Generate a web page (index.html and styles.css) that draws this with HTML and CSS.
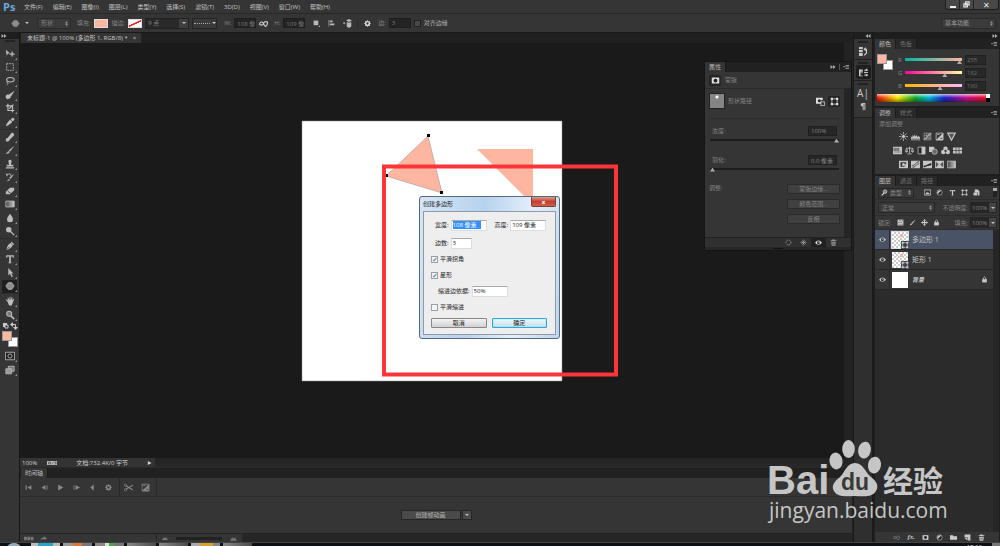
FILE: index.html
```html
<!DOCTYPE html>
<html lang="zh-CN">
<head>
<meta charset="utf-8">
<title>未标题-1</title>
<link rel="stylesheet" href="styles.css">
</head>
<body>
<svg class="defs" aria-hidden="true">
  <symbol id="move" viewBox="0 0 12 12"><path d="M1 1l5 4-2.500.5L2 8z"/><path d="M8.500 3v6M5.500 6h6" stroke="currentColor" stroke-width="1.500"/></symbol>
  <symbol id="marquee" viewBox="0 0 12 12"><path d="M2 2h8v8H2z" fill="none" stroke="currentColor" stroke-dasharray="2 1"/></symbol>
  <symbol id="lasso" viewBox="0 0 12 12"><ellipse cx="6.500" cy="4.500" rx="4.500" ry="2.700" fill="none" stroke="currentColor" stroke-width="1.300"/><path d="M3 6q-2 2 0 2t-1 3" fill="none" stroke="currentColor"/></symbol>
  <symbol id="quick" viewBox="0 0 12 12"><path d="M11.500 1L7 8 4 6z"/><path d="M1 7q2-3 5 0t-3 4q-3-1-2-4z"/></symbol>
  <symbol id="crop" viewBox="0 0 12 12"><path d="M3.500 1v8H11M1 3.500h8V11M10 2L5 7" fill="none" stroke="currentColor" stroke-width="1.400"/></symbol>
  <symbol id="dropper" viewBox="0 0 12 12"><path d="M9 1q3 0 2 3L9 5 7 3zM6 3l3 3-5 4-3 1 1-3z"/></symbol>
  <symbol id="heal" viewBox="0 0 12 12"><path d="M8 1q3-1 3 3L5 10q-2 1-3-1z"/><path d="M1 8q3-2 4 1t-4 2z"/></symbol>
  <symbol id="brush" viewBox="0 0 12 12"><path d="M11.500 1L6 8 4.500 6.500zM4 7l1.500 2Q4 11 .5 10.500 2.500 10 4 7z"/></symbol>
  <symbol id="stamp" viewBox="0 0 12 12"><path d="M4 3a2 2 0 114 0L7 7h3v2H2V7h3zM1 10h10v1.500H1z"/></symbol>
  <symbol id="history-brush" viewBox="0 0 12 12"><path d="M11 2L7 8 5 7zM5 8l1 2-4 1zM1 2h4v1H3v2H2z"/><path d="M5 2q3 0 2 3" fill="none" stroke="currentColor"/></symbol>
  <symbol id="eraser" viewBox="0 0 12 12"><path d="M6 2h5v3L6 10H1V7z"/><path d="M3 6l4 3" stroke="#353535"/></symbol>
  <symbol id="gradient" viewBox="0 0 12 12"><path d="M1 2.500h10v7H1z" fill="url(#gg)" stroke="currentColor"/></symbol>
  <symbol id="drop" viewBox="0 0 12 12"><path d="M6 1q4 5 3.500 7a3.500 3 0 01-7 0Q2 6 6 1z"/></symbol>
  <symbol id="dodge" viewBox="0 0 12 12"><circle cx="4.500" cy="4.500" r="3.300"/><path d="M6 6l5 5" stroke="currentColor" stroke-width="1.500"/></symbol>
  <symbol id="pen" viewBox="0 0 12 12"><path d="M8 1l3 3-2 1-2-3zM6.500 2.500L9 5.500Q8 9 1.500 11 3 4 6.500 2.500z"/><path d="M1.500 11L5.500 7" stroke="#353535"/></symbol>
  <symbol id="type" viewBox="0 0 12 12"><path d="M1.500 1.500h9v3h-1L9 3H7v7l1 .5v.5H4v-.5l1-.5V3H3l-.5 1.500h-1z"/></symbol>
  <symbol id="arrow" viewBox="0 0 12 12"><path d="M4 0v9l2-2 2 4 1.500-1-2-3.500H10z"/></symbol>
  <symbol id="poly" viewBox="0 0 12 12"><path d="M4 2h4l3 4-3 4H4L1 6z" fill="#8c8c8c" stroke="currentColor"/></symbol>
  <symbol id="hand" viewBox="0 0 12 12"><path d="M3 7L1 4.500l1-.7L4 5.500 3 2h1l1.500 3V1h1v4L8 1.500h1L8.500 5 10 3.500l1 .5-2 5-1 2.500H5z"/></symbol>
  <symbol id="zoom" viewBox="0 0 12 12"><circle cx="5" cy="4.500" r="3" fill="#777" stroke="currentColor" stroke-width="1.300"/><path d="M7 7l4 4" stroke="currentColor" stroke-width="2"/></symbol>
  <symbol id="mask" viewBox="0 0 12 12"><path d="M1 2h10v8H1z"/><circle cx="6" cy="6" r="2.500" fill="#222"/></symbol>
  <symbol id="screens" viewBox="0 0 12 12"><path d="M4 1.500h7v6H4z" fill="#777" stroke="currentColor"/><path d="M1 4.500h7v6H1z" fill="#999" stroke="currentColor"/></symbol>
  <symbol id="link" viewBox="0 0 12 12"><path d="M6 6Q3.500 2.500 1.500 5t1 3T6 6t3.500-2.500 1 4.500T6 6" fill="none" stroke="currentColor" stroke-width="1.500"/></symbol>
  <symbol id="combine" viewBox="0 0 12 12"><path d="M1 1h8v8H1z"/><path d="M9 12l3-3v3z"/></symbol>
  <symbol id="align" viewBox="0 0 12 12"><path d="M1 0h1v11H1zM3 1h5v3H3zM3 6h8v3H3z"/></symbol>
  <symbol id="stack" viewBox="0 0 12 12"><path d="M8 0l4 2-4 2-4-2zM5 4l3 1 3-1v6l-3 2-3-2zM0 5h3v1H0zM1 4h1v3H1z"/></symbol>
  <symbol id="gear" viewBox="0 0 12 12"><path d="M6 .5v11M.5 6h11M2 2l8 8M10 2l-8 8" stroke="currentColor" stroke-width="1.500"/><circle cx="6" cy="6" r="3.200" fill="#333" stroke="currentColor" stroke-width="2.400"/></symbol>
  <symbol id="eye" viewBox="0 0 12 12"><path d="M0 6.500Q6-1 12 6.500 6 13 0 6.500z"/><circle cx="6" cy="6.300" r="2.500" fill="#222"/><circle cx="6.500" cy="5.500" r="1"/></symbol>
  <symbol id="trash" viewBox="0 0 12 12"><path d="M4 1h4v1h3v1.500H1V2h3zM2 4.500h8l-1 7H3z"/><path d="M5 6v4M7 6v4" stroke="#333"/></symbol>
  <symbol id="lock" viewBox="0 0 12 12"><path d="M2 5.500h8V11H2z"/><path d="M4 6V3.500q2-3.500 4 0V6" fill="none" stroke="currentColor" stroke-width="1.500"/></symbol>
  <symbol id="frame" viewBox="0 0 12 12"><path d="M2.500 2.500h7v7h-7z" fill="none" stroke="currentColor"/><path d="M1 1h3v3H1zM8 1h3v3H8zM1 8h3v3H1zM8 8h3v3H8z"/></symbol>
  <symbol id="cmask" viewBox="0 0 12 12"><path d="M0 1h9v3H7v5H0z"/><circle cx="4.500" cy="5" r="2" fill="#222"/><path d="M6.500 6.500h5v5h-5z" fill="#333" stroke="currentColor"/></symbol>
  <symbol id="dotcircle" viewBox="0 0 12 12"><circle cx="6" cy="6" r="4.200" fill="none" stroke="currentColor" stroke-width="1.500" stroke-dasharray="2.500 1.500"/></symbol>
  <symbol id="apply" viewBox="0 0 12 12"><path d="M6 1l5 5-5 5-5-5z" fill="none" stroke="currentColor"/><path d="M6 3v6M3 6h6" stroke="currentColor" stroke-width="2"/></symbol>
  <symbol id="sun" viewBox="0 0 12 12"><path d="M6 0v12M0 6h12M2 2l8 8M10 2l-8 8" stroke="currentColor"/><circle cx="6" cy="6" r="2.700" stroke="#353535"/></symbol>
  <symbol id="levels" viewBox="0 0 12 12"><path d="M0 9V6l2 1V4l2 2 1-3 1 3 2-2v3l2-2 1 2 1-1v3zM0 10h12v1H0z"/></symbol>
  <symbol id="curves" viewBox="0 0 12 12"><path d="M1.500 1.500h9v9h-9zM1.500 5h9M5 1.500v9M8 1.500v9M1.500 8h9" fill="none" stroke="currentColor" stroke-width=".7"/><path d="M1 10Q5 9 6 6t5-4" fill="none" stroke="currentColor" stroke-width="1.300"/></symbol>
  <symbol id="exposure" viewBox="0 0 12 12"><path d="M1.500 1.500h9v9h-9z" fill="none" stroke="currentColor"/><path d="M11 1v10H1zM3 3h3v1H3z"/><path d="M7 8.500h3" stroke="#333"/></symbol>
  <symbol id="vibrance" viewBox="0 0 12 12"><path d="M1 1.500h10L6 11z" fill="#555" stroke="currentColor" stroke-width="1.500"/></symbol>
  <symbol id="grid" viewBox="0 0 12 12"><path d="M0 2h12v8H0z"/><path d="M4 2v8M8 2v8M0 6h12" stroke="#454545"/></symbol>
  <symbol id="huesat" viewBox="0 0 12 12"><path d="M0 1h12v10H0z"/><path d="M1 3h3v3H1zM5 3h3v3H5zM1 8h10" fill="#888" stroke="#666"/></symbol>
  <symbol id="scales" viewBox="0 0 12 12"><path d="M6 1v9M2 3h8M3 10.500h6M2 3L.5 7h3zM10 3L8.500 7h3z" fill="none" stroke="currentColor"/><path d="M0 7h4L2 9zM8 7h4l-2 2z"/></symbol>
  <symbol id="bw" viewBox="0 0 12 12"><path d="M1.500 1.500h9v9h-9z" fill="#222" stroke="currentColor"/><path d="M6 1h5v10H6z"/></symbol>
  <symbol id="photo" viewBox="0 0 12 12"><path d="M0 1h7v7H0z"/><circle cx="7.500" cy="7.500" r="3.500" fill="#666" stroke="currentColor"/></symbol>
  <symbol id="mixer" viewBox="0 0 12 12"><circle cx="6" cy="3.500" r="3"/><circle cx="3" cy="8" r="3"/><circle cx="9" cy="8" r="3"/><circle cx="6" cy="6.500" r="1.500" fill="#333"/></symbol>
  <symbol id="invert" viewBox="0 0 12 12"><path d="M0 1h12v10H0z"/><path d="M2 3h8L7 9H2z" fill="#333"/><circle cx="6" cy="6" r="2"/></symbol>
  <symbol id="poster" viewBox="0 0 12 12"><path d="M0 1h12v10H0z"/><path d="M1 8q4-1 5-3t5-3M2 10q4-1 5-3t4-2" fill="none" stroke="#444" stroke-width="1.200"/></symbol>
  <symbol id="thresh" viewBox="0 0 12 12"><path d="M0 1h12v10H0z"/><path d="M1 10V7q3 1 5-1l5-2v3L6 8z" fill="#222"/></symbol>
  <symbol id="selective" viewBox="0 0 12 12"><path d="M0 1h12v10H0z"/><path d="M1 2l4 4-4 4zM11 2L7 6l4 4z" fill="#555"/></symbol>
  <symbol id="gmap" viewBox="0 0 12 12"><path d="M.5 1.500h11v9H.5z" fill="url(#gg)" stroke="currentColor"/></symbol>
  <symbol id="image" viewBox="0 0 12 12"><path d="M.5 1.500h11v9H.5z" fill="none" stroke="currentColor" stroke-width="1.300"/><path d="M2 9l3-4 2 2 1-1 2 3z"/></symbol>
  <symbol id="half" viewBox="0 0 12 12"><circle cx="6" cy="6" r="4.500" fill="#222" stroke="currentColor"/><path d="M2.500 9A5 5 0 019 2.500z"/></symbol>
  <symbol id="smart" viewBox="0 0 12 12"><path d="M3 1h5l3 3v7H8V6H3z"/><path d="M1 6h6v5H1z"/></symbol>
  <symbol id="checker" viewBox="0 0 12 12"><path d="M1 1h10v10H1z"/><path d="M4 2h2v2H4zM8 2h2v2H8zM2 5h2v2H2zM6 5h2v2H6zM4 8h2v2H4zM8 8h2v2H8z" fill="#666"/></symbol>
  <symbol id="cross" viewBox="0 0 12 12"><path d="M6 0l2.500 3H7v2h2V3.500L12 6 9 8.500V7H7v2h1.500L6 12 3.500 9H5V7H3v1.500L0 6l3-2.500V5h2V3H3.500z"/></symbol>
  <symbol id="folder" viewBox="0 0 12 12"><path d="M0 2h5l1 2h6v6H0z"/></symbol>
  <symbol id="new" viewBox="0 0 12 12"><path d="M1 1h10v10H7V6H1z"/><path d="M1 7h5v4z"/></symbol>
  <symbol id="hist" viewBox="0 0 12 12"><path d="M0 0h5v3H0zM0 4h5v3H0zM0 8h5v4H0z"/><path d="M7 3h3v5l-3 3" fill="none" stroke="currentColor" stroke-width="1.500"/><path d="M6 3l3-3v6z"/></symbol>
  <symbol id="props" viewBox="0 0 12 12"><path d="M0 2h5v3H2v1h3v1H2v3h3v1H0z"/><path d="M7 3h5M7 6h5M7 9.500h5" stroke="currentColor" stroke-width="1.200"/><path d="M9 1h2v3H9zM7 5h2v2H7zM9 8h2v3H9z"/></symbol>
  <symbol id="menu" viewBox="0 0 12 12"><path d="M0 4h4L2 7zM5 2h7v1.500H5zM5 5h7v1.500H5zM5 8h7v1.500H5z"/></symbol>
  <symbol id="dleft" viewBox="0 0 12 12"><path d="M6 2v8L1 6zM11 2v8L6 6z"/></symbol>
  <symbol id="dright" viewBox="0 0 12 12"><path d="M1 2v8l5-4zM6 2v8l5-4z"/></symbol>
  <symbol id="scissors" viewBox="0 0 12 12"><path d="M3 4l9 5M3 8l9-5" stroke="currentColor" stroke-width="1.400"/><circle cx="2" cy="3" r="1.500" fill="none" stroke="currentColor"/><circle cx="2" cy="9" r="1.500" fill="none" stroke="currentColor"/></symbol>
  <symbol id="first" viewBox="0 0 12 12"><path d="M1 2h2v8H1zM11 2v8L4 6z"/></symbol>
  <symbol id="prev" viewBox="0 0 12 12"><path d="M7 2v8L1 6zM8 2h1v8H8zM10 2h1v8h-1z"/></symbol>
  <symbol id="play" viewBox="0 0 12 12"><path d="M2 1l9 5-9 5z"/></symbol>
  <symbol id="next" viewBox="0 0 12 12"><path d="M1 2h1v8H1zM3 2h1v8H3zM5 2v8l7-4z"/></symbol>
  <symbol id="audio" viewBox="0 0 12 12"><path d="M8 1v10L2 6z"/></symbol>
  <symbol id="share" viewBox="0 0 12 12"><path d="M7 2l5 3.500L7 9V7Q3 6 1 10 1 4 7 4z"/></symbol>
  <symbol id="frames" viewBox="0 0 18 12"><path d="M0 3h5v6H0zM6 3h5v6H6zM12 3h5v6h-5z"/></symbol>
  <symbol id="mount" viewBox="0 0 12 12"><path d="M0 10l4-6 2 3 2-3 4 6z"/></symbol>
  <symbol id="restore" viewBox="0 0 12 12"><path d="M4.500 1.500h6v5h-6zM1.500 5h6v5h-6z" fill="#555" stroke="currentColor" stroke-width="2"/></symbol>
  <linearGradient id="gg"><stop offset="0" stop-color="#444"/><stop offset="1" stop-color="#ccc"/></linearGradient>
</svg>

<header class="menubar">
  <span class="logo">Ps</span>
  <nav class="menus"><button>文件(F)</button><button>编辑(E)</button><button>图像(I)</button><button>图层(L)</button><button>类型(Y)</button><button>选择(S)</button><button>滤镜(T)</button><button>3D(D)</button><button>视图(V)</button><button>窗口(W)</button><button>帮助(H)</button></nav>
  <div class="winctl"><button aria-label="最小化"><i class="min"></i></button><button aria-label="还原"><svg class="ic"><use href="#restore"/></svg></button><button aria-label="关闭">✕</button></div>
</header>

<div class="options">
  <button class="preset" aria-label="多边形工具"><svg class="ic big"><use href="#poly"/></svg><i class="down"></i></button>
  <select class="mode" aria-label="模式"><option>形状</option></select>
  <span class="pair">填充:<button class="sw fill" aria-label="填充颜色"></button></span>
  <span class="pair">描边:<button class="sw none" aria-label="描边颜色"></button></span>
  <span class="combo"><input aria-label="描边宽度" value="9 点"><button aria-label="宽度列表"><i class="down"></i></button></span>
  <button class="line" aria-label="描边类型"><i class="dots"></i><i class="down"></i></button>
  <label class="pair wide">W:<input class="size" value="108 像素"></label>
  <svg class="ic big chain"><use href="#link"/></svg>
  <label class="pair">H:<input class="size" value="109 像素"></label>
  <div class="ops"><button aria-label="路径操作"><svg class="ic"><use href="#combine"/></svg></button><button aria-label="对齐"><svg class="ic"><use href="#align"/></svg></button><button aria-label="排列"><svg class="ic big"><use href="#stack"/></svg></button></div>
  <button class="cog" aria-label="设置"><svg class="ic"><use href="#gear"/></svg></button>
  <label class="pair dim">边:<input class="size" value="3"></label>
  <label class="edge"><input type="checkbox">对齐边缘</label>
  <select class="works" aria-label="工作区"><option>基本功能</option></select>
</div>

<div class="workspace">
  <aside class="tools">
    <div class="tophead"><svg class="tiny"><use href="#dright"/></svg></div>
    <i class="grip"></i>
    <div class="group g6"><button aria-label="移动"><svg><use href="#move"/></svg></button><button aria-label="选框"><svg><use href="#marquee"/></svg></button><button aria-label="套索"><svg><use href="#lasso"/></svg></button><button aria-label="快速选择"><svg><use href="#quick"/></svg></button><button aria-label="裁剪"><svg><use href="#crop"/></svg></button><button aria-label="吸管"><svg><use href="#dropper"/></svg></button></div>
    <div class="group g8"><button aria-label="修复"><svg><use href="#heal"/></svg></button><button aria-label="画笔"><svg><use href="#brush"/></svg></button><button aria-label="图章"><svg><use href="#stamp"/></svg></button><button aria-label="历史画笔"><svg><use href="#history-brush"/></svg></button><button aria-label="橡皮擦"><svg><use href="#eraser"/></svg></button><button aria-label="渐变"><svg><use href="#gradient"/></svg></button><button aria-label="模糊"><svg><use href="#drop"/></svg></button><button aria-label="减淡"><svg><use href="#dodge"/></svg></button></div>
    <div class="group g4"><button aria-label="钢笔"><svg><use href="#pen"/></svg></button><button aria-label="文字"><svg><use href="#type"/></svg></button><button aria-label="路径选择"><svg><use href="#arrow"/></svg></button><button class="on" aria-label="多边形"><svg><use href="#poly"/></svg></button></div>
    <div class="group g2"><button aria-label="抓手"><svg><use href="#hand"/></svg></button><button aria-label="缩放"><svg><use href="#zoom"/></svg></button></div>
    <svg class="swap" viewBox="0 0 16 8"><path d="M1 1h4v4H1z" fill="#ccc"/><path d="M3 3h3v3H3z" fill="#333" stroke="#ccc"/><path d="M10 2.500h3.500V7" fill="none" stroke="#ccc"/><path d="M8 2.500L11 0v5zM11 5h5l-2.500 3z" fill="#ccc"/></svg>
    <div class="fgbg"><i class="bg"></i><i class="fg"></i></div>
    <div class="group g2"><button aria-label="快速蒙版"><svg viewBox="0 0 12 12"><path d="M.5 1.500h11v9H.5z" fill="#222" stroke="currentColor"/><circle cx="6" cy="6" r="2.500" fill="none" stroke="currentColor"/></svg></button><button aria-label="屏幕模式"><svg><use href="#screens"/></svg></button></div>
  </aside>

  <main class="main">
    <div class="doctabs"><div class="doctab">未标题-1 @ 100% (多边形 1, RGB/8) * <button aria-label="关闭文档">×</button></div></div>
    <div class="canvas">
      <svg class="art" viewBox="0 0 320 264">
        <path d="M1 1h260v260H1z" fill="#fff" stroke="#888" stroke-width=".5"/>
        <path d="M127 16L85 56l56 17z" fill="#ffb6a0" stroke="#999" stroke-width=".6"/>
        <path d="M126 14h3v3h-3zM84 54h3v3h-3zM139 71h3v3h-3z" fill="#000"/>
        <path d="M176 29h56v56z" fill="#ffb6a0"/>
        <path d="M83 46.500h232v208H83z" fill="none" stroke="#fb3538" stroke-width="4"/>
      </svg>
      <form class="dialog">
        <div class="title"><span>创建多边形</span><button type="button" aria-label="关闭">x</button></div>
        <div class="dbody">
          <div class="drow ind"><label>宽度:<span class="field w35"><input class="hl" value="108 像素"></span></label><label class="second">高度:<span class="field w35"><input value="109 像素"></span></label></div>
          <div class="drow ind last"><label>边数:<span class="field w20"><input value="3"></span></label></div>
          <div class="drow"><label class="tick"><input type="checkbox" checked>平滑拐角</label></div>
          <div class="drow"><label class="tick"><input type="checkbox" checked>星形</label></div>
          <div class="drow ind2"><label>缩进边依据:<span class="field w35"><input value="50%"></span></label></div>
          <div class="drow"><label class="tick"><input type="checkbox">平滑缩进</label></div>
          <div class="dbtns"><button type="button">取消</button><button type="button" class="ok">确定</button></div>
        </div>
      </form>
      <section class="props">
        <div class="tabs"><button class="tab on">属性</button><span class="pm"><svg class="tiny"><use href="#dright"/></svg><i></i><svg class="tiny"><use href="#menu"/></svg></span></div>
        <div class="pkind"><span class="chip"><svg class="ic big"><use href="#mask"/></svg></span>蒙版</div>
        <div class="pbody">
          <div class="ppath"><i class="pthumb"></i><span>形状路径</span><span class="chip push"><svg class="ic big"><use href="#cmask"/></svg></span><span class="chip"><svg class="ic big"><use href="#frame"/></svg></span></div>
          <div class="pline"><label for="dens">浓度:</label><input id="dens" class="pin" value="100%"></div>
          <input class="range" type="range" aria-label="浓度" value="100">
          <div class="pline"><label for="feather">羽化:</label><input id="feather" class="pin" value="0.0 像素"></div>
          <input class="range" type="range" aria-label="羽化" value="0">
          <div class="padj"><span>调整:</span><div class="pbtns"><button>蒙版边缘...</button><button>颜色范围...</button><button>反相</button></div></div>
        </div>
        <div class="pfoot"><button aria-label="载入选区"><svg class="ic"><use href="#dotcircle"/></svg></button><button aria-label="应用蒙版"><svg class="ic"><use href="#apply"/></svg></button><button class="on" aria-label="切换"><svg class="ic"><use href="#eye"/></svg></button><button aria-label="删除蒙版"><svg class="ic"><use href="#trash"/></svg></button></div>
        <div class="pgrip"><i></i></div>
      </section>
    </div>
    <div class="status"><div class="sinfo"><span>100%</span><svg viewBox="0 0 20 10"><path d="M0 1h20v8H0z" fill="#bbb"/><path d="M3 3h4v4H3zM9 8l5-6M15 3h3v4h-3" fill="none" stroke="#222"/></svg><span class="doc">文档:732.4K/0 字节</span><svg class="ic"><use href="#play"/></svg></div></div>
    <section class="timeline">
      <div class="tabs"><button class="tab on">时间轴</button></div>
      <div class="tctl"><div class="players"><button aria-label="首帧"><svg class="ic"><use href="#first"/></svg></button><button aria-label="上一帧"><svg class="ic"><use href="#prev"/></svg></button><button aria-label="播放"><svg class="ic"><use href="#play"/></svg></button><button aria-label="下一帧"><svg class="ic"><use href="#next"/></svg></button><button aria-label="音频"><svg class="ic"><use href="#audio"/></svg></button><button aria-label="选项"><svg class="ic"><use href="#gear"/></svg></button></div><div class="cuts"><button aria-label="拆分"><svg class="ic big"><use href="#scissors"/></svg></button><button aria-label="过渡"><svg class="ic big"><use href="#exposure"/></svg></button></div></div>
      <div class="tmid"><button class="create">创建帧动画</button><button class="pick" aria-label="时间轴类型"><i class="down"></i></button></div>
      <div class="tfoot"><div class="fl"><svg class="fr"><use href="#frames"/></svg><svg class="ic"><use href="#share"/></svg></div><div class="fz"><svg class="tiny"><use href="#mount"/></svg><i></i><svg class="ic"><use href="#mount"/></svg></div></div>
    </section>
  </main>

  <aside class="dock">
    <div class="tophead right"><svg class="tiny"><use href="#dleft"/></svg></div>
    <div class="dgroup"><i class="grip"></i><button aria-label="历史记录"><svg><use href="#hist"/></svg></button></div>
    <div class="dgroup"><i class="grip"></i><button class="on" aria-label="属性"><svg><use href="#props"/></svg></button></div>
    <div class="dgroup two"><i class="grip"></i><button>A|</button><button class="para">¶</button></div>
  </aside>

  <aside class="panels">
    <div class="tophead right"><svg class="tiny"><use href="#dright"/></svg></div>
    <section class="panel color">
      <div class="tabs"><button class="tab on">颜色</button><button class="tab">色板</button><span class="pm"><svg class="tiny"><use href="#menu"/></svg></span></div>
      <div class="cbody"><div class="cpair"><i class="bg"></i><i class="fg"></i></div>
        <div class="rgb">
          <label>R<input type="range" class="r" max="255" value="255" aria-label="红"><input class="num" aria-label="红值" value="255"></label>
          <label>G<input type="range" class="g" max="255" value="182" aria-label="绿"><input class="num" aria-label="绿值" value="182"></label>
          <label>B<input type="range" class="b" max="255" value="160" aria-label="蓝"><input class="num" aria-label="蓝值" value="160"></label>
        </div></div>
      <div class="spectrum"><i></i></div>
    </section>
    <section class="panel adjust">
      <div class="tabs"><button class="tab on">调整</button><button class="tab">样式</button><span class="pm"><svg class="tiny"><use href="#menu"/></svg></span></div>
      <div class="abody"><div class="ahead">添加调整</div>
        <div class="arow"><svg><use href="#sun"/></svg><svg><use href="#levels"/></svg><svg><use href="#curves"/></svg><svg><use href="#exposure"/></svg><svg><use href="#vibrance"/></svg></div>
        <div class="arow"><svg><use href="#huesat"/></svg><svg><use href="#scales"/></svg><svg><use href="#bw"/></svg><svg><use href="#photo"/></svg><svg><use href="#mixer"/></svg><svg><use href="#grid"/></svg></div>
        <div class="arow"><svg><use href="#invert"/></svg><svg><use href="#poster"/></svg><svg><use href="#thresh"/></svg><svg><use href="#selective"/></svg><svg><use href="#gmap"/></svg></div>
      </div>
    </section>
    <section class="panel layers">
      <div class="tabs"><button class="tab on">图层</button><button class="tab">通道</button><button class="tab">路径</button><span class="pm"><svg class="tiny"><use href="#menu"/></svg></span></div>
      <div class="lrow"><span class="find"><svg class="ic flip"><use href="#zoom"/></svg><select class="kind" aria-label="筛选"><option>类型</option></select></span><span class="filters"><svg class="ic"><use href="#image"/></svg><svg class="ic"><use href="#half"/></svg><svg class="ic"><use href="#type"/></svg><svg class="ic"><use href="#frame"/></svg><svg class="ic"><use href="#smart"/></svg></span><i class="switch"></i></div>
      <div class="lrow r2"><select class="blend" aria-label="混合模式"><option>正常</option></select><label class="pct">不透明度:<input value="100%"></label><button class="dd" aria-label="不透明度滑块"><i class="down"></i></button></div>
      <div class="lrow"><span class="dimtxt">锁定:</span><span class="locks"><svg class="ic"><use href="#checker"/></svg><svg class="ic"><use href="#brush"/></svg><svg class="ic"><use href="#cross"/></svg><svg class="ic"><use href="#lock"/></svg></span><label class="pct">填充:<input value="100%"></label><button class="dd" aria-label="填充滑块"><i class="down"></i></button></div>
      <ul class="list">
        <li class="sel"><span class="vis"><svg class="ic"><use href="#eye"/></svg></span><span class="thumb chk sel"><svg class="tf"><use href="#frame"/></svg></span><span>多边形 1</span></li>
        <li><span class="vis"><svg class="ic"><use href="#eye"/></svg></span><span class="thumb chk"><svg class="tf"><use href="#frame"/></svg></span><span>矩形 1</span></li>
        <li><span class="vis"><svg class="ic"><use href="#eye"/></svg></span><span class="thumb"></span><em>背景</em><svg class="ic lk"><use href="#lock"/></svg></li>
      </ul>
      <div class="empty"></div>
      <div class="lfoot"><svg class="ic dimmer"><use href="#link"/></svg><span class="fx">fx.</span><svg class="ic"><use href="#mask"/></svg><svg class="ic"><use href="#half"/></svg><svg class="ic"><use href="#folder"/></svg><svg class="ic"><use href="#new"/></svg><svg class="ic"><use href="#trash"/></svg></div>
    </section>
  </aside>
</div>

<footer class="taskbar"><i class="orb"></i><div class="apps"><i class="a1"></i><i class="a2"></i><i class="a3"></i><i></i><i></i><i class="a4"></i><i></i></div><span class="clock">17:18</span><i class="desk"></i></footer>

<svg class="watermark" viewBox="0 0 184 90" role="img" aria-label="Baidu经验">
  <g fill="#d2d2d2"><ellipse cx="70" cy="22" rx="6.500" ry="8.500" transform="rotate(-10 70 22)"/><ellipse cx="82.500" cy="10" rx="6.300" ry="9"/><ellipse cx="98.500" cy="11" rx="6.300" ry="8.500" transform="rotate(12 98 11)"/><ellipse cx="108.500" cy="26" rx="6.500" ry="8.500" transform="rotate(10 108 26)"/><path d="M89 24c8 0 10 9 16 14 6 5 8 9 5 14-4 7-13 5-21 5s-17 2-21-5c-3-5 0-9 6-14 5-5 7-14 15-14z"/>
  <text class="wb" x="1" y="55">Bai</text><text class="wc" x="117" y="53">经验</text><text class="wu" x="3" y="79">jingyan.baidu.com</text></g>
  <text class="wd" x="75" y="51">du</text>
</svg>
</body>
</html>
```
FILE: styles.css
```css
* { box-sizing: border-box; }
html, body { height: 100%; }
body {
  margin: 0; display: flex; flex-direction: column; position: relative; overflow: hidden;
  background: #1a1a1a; color: #b4b4b4;
  font: 6px/8px "Open Sans", "Noto Sans CJK SC", sans-serif;
}
button, input, select { font: inherit; color: inherit; margin: 0; padding: 0; border: 0; background: none; border-radius: 0; min-width: 0; }
button { display: flex; align-items: center; justify-content: center; flex: none; white-space: nowrap; }
select { appearance: none; }
svg { fill: currentColor; flex: none; display: block; }
i { display: block; flex: none; }
.defs { position: absolute; width: 0; height: 0; }
.ic { width: 7px; height: 7px; }
.ic.big { width: 9px; height: 9px; }
.tiny { width: 6px; height: 6px; }
.down { width: 0; height: 0; border: 2px solid transparent; border-top: 2px solid #c0c0c0; border-bottom: 0; }

.menubar { display: flex; height: 14px; flex: none; background: #353535; border-bottom: 1px solid #282828; color: #c4c4c4; }
.logo { width: 22px; padding-left: 3px; font: bold 11px/14px "Open Sans", sans-serif; color: #6ea8dc; }
.menus { display: flex; gap: 10px; padding-left: 2px; }
.winctl { display: flex; margin-left: auto; height: 10px; border: 1px solid #1e1e1e; border-top: 0; border-radius: 0 0 3px 3px; margin-right: 1px; background: #484848; color: #e6e6e6; }
.winctl button { width: 14px; border-right: 1px solid #222; }
.winctl button:last-child { width: 24px; border: 0; font-size: 8px; }
.min { width: 6px; height: 2px; background: #eee; margin-top: 4px; }

.options { display: flex; align-items: center; height: 18px; flex: none; background: #353535; color: #858585; padding: 0 4px 0 11px; }
.preset { gap: 5px; width: 26px; justify-content: flex-start; }
.mode, .works, .kind, .blend {
  background: url("data:image/svg+xml,%3Csvg xmlns='http://www.w3.org/2000/svg' viewBox='0 0 4 7'%3E%3Cpath d='M0 3l2-3 2 3zM0 4l2 3 2-3z' fill='%23909090'/%3E%3C/svg%3E") right 2px center / 3px 5px no-repeat #3b3b3b;
}
.mode, .works { height: 11px; padding-left: 3px; border: 1px solid #2a2a2a; border-radius: 1px; width: 34px; }
.works { margin-left: auto; width: 55px; color: #a0a0a0; }
.pair { display: flex; align-items: center; gap: 3px; margin-left: 6px; white-space: nowrap; flex: none; }
.pair + .pair { margin-left: 4px; }
.sw { width: 14px; height: 9px; border: 1px solid #ddd; background: #ffb6a0; }
.sw.none { background: linear-gradient(155deg, #fff 42%, #e22 45%, #e22 55%, #fff 58%); }
.combo { display: flex; margin-left: 3px; height: 11px; border: 1px solid #222; }
.combo input { width: 33px; background: #292929; padding-left: 2px; }
.combo button { width: 9px; background: #404040; }
.line { width: 25px; height: 11px; margin-left: 3px; border: 1px solid #252525; background: #3a3a3a; gap: 2px; }
.dots { width: 16px; border-top: 1px dotted #aaa; }
.size { width: 22px; height: 10px; background: #242424; border: 1px solid #1e1e1e; padding-left: 2px; color: #777; }
.wide { margin-left: 7px; }
.chain { margin: 0 0 0 3px; color: #ccc; }
.ops { display: flex; gap: 8px; margin-left: 8px; padding-right: 5px; border-right: 1px solid #292929; color: #b8b8b8; }
.cog { margin-left: 6px; color: #ddd; }
.dim { margin-left: 7px; }
.edge { display: flex; align-items: center; gap: 3px; margin-left: 3px; color: #b4b4b4; white-space: nowrap; }
.edge input { appearance: none; width: 7px; height: 7px; background: #484848; border: 1px solid #222; }

.workspace { display: flex; flex: 1; min-height: 0; }
.tophead { height: 7px; background: #1e1e1e; display: flex; align-items: center; padding: 0 1px; color: #aaa; flex: none; }
.tophead.right { justify-content: flex-end; }
.grip { width: 10px; height: 2px; background: #222; margin: 1px auto; }
.tools { width: 20px; flex: none; background: #353535; border-right: 1px solid #161616; color: #bcbcbc; }
.tools .grip { margin-bottom: 5px; }
.group { display: grid; grid-auto-rows: 1fr; border-bottom: 1px solid #2b2b2b; }
.group svg { width: 10px; height: 10px; }
.group button { margin: 0 2px; position: relative; min-height: 0; }
.group button::after { content: ""; position: absolute; right: 0; bottom: 1px; border-left: 2px solid transparent; border-bottom: 2px solid #999; }
.group button.on { background: #1f1f1f; border-radius: 1px; }
.g6 { height: 83px; } .g8 { height: 109px; } .g4 { height: 55px; } .g2 { height: 28px; border: 0; }
.swap { width: 16px; height: 8px; margin: 0 auto; }
.fgbg, .cpair { position: relative; width: 16px; height: 16px; margin: 1px auto 2px; flex: none; }
.fg, .bg { position: absolute; width: 10px; height: 10px; border: 1px solid #999; }
.fg { left: 0; top: 0; background: #ffb6a0; }
.bg { right: 0; bottom: 0; background: #fff; }

.main { flex: 1; min-width: 0; display: flex; flex-direction: column; }
.doctabs { height: 11px; flex: none; background: #202020; border-top: 1px solid #191919; padding-left: 1px; display: flex; }
.doctab { background: #343434; color: #c8c8c8; padding: 0 5px 0 6px; display: flex; align-items: center; gap: 5px; white-space: nowrap; }
.canvas { flex: 1; min-height: 0; position: relative; background: #1a1a1a; border-right: 9px solid #232323; }
.art { position: absolute; left: 281px; top: 77px; width: 320px; height: 264px; }
.dialog { position: absolute; left: 399px; top: 153px; width: 141px; padding: 0 3px 3px; border: 1px solid #57697c; border-radius: 3px; background: linear-gradient(100deg, #d6e6f6, #b6d2ee 40%, #e4effa 70%, #bcd6f0); color: #222; }
.title { display: flex; justify-content: space-between; height: 14px; line-height: 14px; }
.title button { width: 25px; height: 10px; background: linear-gradient(#dd9a90, #c2402e 50%, #cf6046); border: 1px solid #7c4038; border-top: 0; border-radius: 0 0 2px 2px; color: #fff; font-weight: bold; }
.dbody { background: #eee; border: 1px solid #8f9aa6; padding: 7px 8px 6px 7px; }
.drow { display: flex; height: 16px; align-items: center; }
.drow.ind { padding-left: 4px; height: 12px; margin-bottom: 6px; }
.drow.last { margin-bottom: 2px; }
.drow.ind2 { padding-left: 7px; }
.drow label { display: flex; align-items: center; gap: 2px; white-space: nowrap; }
.drow .second { margin-left: 8px; }
.field { border: 1px solid #ddd; border-top-color: #aaa; background: #fff; height: 11px; display: flex; align-items: center; padding-left: 1px; }
.field input { width: 100%; }
.w35 { width: 36px; } .w20 { width: 21px; }
.field .hl { width: 28px; background: #3390ff; color: #fff; }
.tick input { appearance: none; width: 7px; height: 7px; border: 1px solid #98a0a8; background: #f4f4f4; display: grid; place-items: center; }
.tick input:checked::before { content: "✓"; font: bold 7px/6px "DejaVu Sans", sans-serif; color: #3a4fa0; }
.dbtns { display: flex; gap: 5px; padding-top: 3px; }
.dbtns button { flex: 1; height: 10px; border: 1px solid #888; border-radius: 1px; background: linear-gradient(#f4f4f4, #d0d0d0); }
.dbtns .ok { border-color: #2aa9d8; background: linear-gradient(#edf6fa, #c2e2f0); box-shadow: inset 0 0 1px #39c3ee; }

.tabs { display: flex; background: #212121; height: 10px; flex: none; }
.tab { padding: 0 4px; color: #707070; background: #292929; border-right: 1px solid #1b1b1b; }
.tab.on { background: #353535; color: #bcbcbc; }
.pm { margin-left: auto; display: flex; align-items: center; gap: 3px; color: #aaa; padding-right: 2px; }
.pm i { width: 1px; height: 6px; background: #555; }
.props { position: absolute; right: -8px; top: 18px; width: 148px; background: #353535; border: 1px solid #151515; color: #858585; }
.pkind { display: flex; align-items: center; gap: 4px; height: 17px; padding-left: 4px; border-bottom: 1px solid #2a2a2a; }
.chip { display: grid; place-items: center; width: 12px; height: 11px; background: #252525; border-radius: 1px; color: #ddd; }
.push { margin-left: auto; background: none; }
.pbody { border-right: 7px solid #252525; padding: 0 4px; height: 148px; }
.ppath { display: flex; align-items: center; gap: 2px; height: 30px; border-bottom: 1px solid #2d2d2d; padding-bottom: 5px; }
.pthumb { width: 16px; height: 16px; border: 1px solid #222; background: radial-gradient(circle at 7px 3px, #fff 1px, #858585 2px); margin-right: 1px; }
.pline { display: flex; justify-content: space-between; align-items: center; padding: 0 3px; margin-top: 7px; height: 10px; }
.pin { width: 29px; height: 10px; background: #262626; border: 1px solid #202020; padding-left: 2px; }
.range, .rgb input[type=range] { appearance: none; display: block; height: 7px; }
.range { width: 129px; margin: 0 0 0 1px; }
.range + .pline { margin-top: 12px; }
.range::-webkit-slider-runnable-track { height: 2px; background: #1d1d1d; }
.range::-webkit-slider-thumb, .rgb input::-webkit-slider-thumb { appearance: none; width: 5px; height: 4px; background: #aaa; clip-path: polygon(50% 0, 100% 100%, 0 100%); }
.padj { display: flex; justify-content: space-between; margin-top: 12px; }
.pbtns { display: grid; gap: 5px; width: 53px; }
.pbtns button { height: 10px; background: #404040; border: 1px solid #2a2a2a; border-radius: 1px; }
.pfoot { display: flex; justify-content: flex-end; padding-right: 10px; height: 10px; background: #303030; border-top: 1px solid #222; }
.pfoot button { width: 15px; color: #999; }
.pfoot .on { background: #202020; color: #ddd; }
.pgrip { height: 3px; background: #262626; display: grid; place-items: center; }
.pgrip i { width: 10px; height: 1px; background: #111; }
.status { height: 10px; flex: none; background: linear-gradient(#222, #2a2a2a); }
.sinfo { width: 135px; height: 9px; background: #333; display: flex; align-items: center; padding: 0 3px 0 2px; color: #d0d0d0; white-space: nowrap; }
.sinfo svg { width: 10px; height: 6px; margin-left: 10px; }
.doc { margin-left: 19px; }
.sinfo .ic { margin-left: auto; width: 5px; }
.timeline { height: 74px; flex: none; display: flex; flex-direction: column; background: #353535; border-right: 1px solid #222; }
.timeline .tabs { padding-left: 1px; }
.tctl { display: flex; height: 19px; flex: none; border-bottom: 1px solid #2b2b2b; color: #888; }
.players, .cuts { display: flex; align-items: center; border-right: 1px solid #2a2a2a; padding: 0 6px 0 5px; gap: 9px; }
.players { width: 100px; }
.cuts { width: 37px; gap: 8px; padding-left: 4px; }
.tmid { flex: 1; display: flex; align-items: center; justify-content: center; gap: 1px; }
.create, .pick { height: 10px; border: 1px solid #262626; background: #4a4a4a; color: #bbb; }
.create { width: 60px; } .pick { width: 10px; }
.tfoot { display: flex; height: 9px; flex: none; background: #262626; border-top: 1px solid #222; color: #777; }
.fl { display: flex; align-items: center; gap: 6px; width: 137px; padding-left: 4px; background: #353535; border-right: 1px solid #262626; }
.fr { width: 10px; height: 7px; }
.fz { display: flex; align-items: center; gap: 8px; background: #353535; padding: 0 5px; }
.fz i { width: 46px; height: 3px; background: #222; }

.dock { width: 20px; flex: none; background: #2f2f2f; border-left: 1px solid #191919; border-right: 1px solid #191919; color: #c8c8c8; }
.dgroup { background: #353535; border-bottom: 1px solid #202020; padding-top: 1px; height: 21px; }
.dgroup.two { height: 37px; }
.dgroup svg { width: 9px; height: 9px; }
.dgroup button { height: 14px; width: 15px; margin: 0 auto; font-size: 10px; }
.dgroup .para { font-size: 9px; font-weight: bold; font-family: "DejaVu Sans", sans-serif; }
.dgroup .on { background: #1e1e1e; border-radius: 2px; }

.panels { width: 127px; flex: none; display: flex; flex-direction: column; background: #1e1e1e; padding: 0 1px 0 2px; color: #858585; }
.panel { background: #353535; border-bottom: 2px solid #1e1e1e; }
.color { height: 69px; flex: none; }
.adjust { height: 68px; flex: none; }
.cbody { display: flex; padding: 4px 13px 0 2px; gap: 5px; height: 45px; }
.cpair { margin: 1px 0 0; }
.rgb { flex: 1; min-width: 0; }
.rgb label { display: flex; align-items: center; gap: 3px; height: 13px; }
.rgb input[type=range] { flex: 1; width: 58px; height: 7px; }
.rgb input[type=range]::-webkit-slider-runnable-track { height: 3px; border-radius: 0; }
.rgb input::-webkit-slider-thumb { margin-top: 2px; }
.r::-webkit-slider-runnable-track { background: linear-gradient(90deg, #00b6a0, #ffb6a0); }
.g::-webkit-slider-runnable-track { background: linear-gradient(90deg, #ff00a0, #ffffa0); }
.b::-webkit-slider-runnable-track { background: linear-gradient(90deg, #ffb600, #ffb6ff); }
.num { width: 21px; height: 10px; background: #282828; border: 1px solid #202020; padding-left: 1px; color: #6e6e6e; flex: none; }
.spectrum { margin: 0 9px 0 2px; height: 8px; padding-left: 109px; background: linear-gradient(#ffffffb0, #ffffff00 45%, #00000070), linear-gradient(90deg, #e11, #fe0 18%, #1a3 34%, #0bd 46%, #22c 60%, #c18 80%, #e11); }
.spectrum i { height: 8px; background: linear-gradient(#fff 50%, #000 50%); }
.ahead { padding: 2px 4px 4px; }
.arow { display: flex; justify-content: center; gap: 3px; height: 14px; padding-right: 19px; color: #c6c6c6; }
.arow svg { width: 9px; height: 9px; }
.layers { flex: 1; min-height: 0; display: flex; flex-direction: column; border: 0; }
.lrow { display: flex; align-items: center; height: 14px; flex: none; padding: 0 2px 0 3px; border-bottom: 1px solid #2d2d2d; }
.r2 { height: 16px; }
.find { display: flex; align-items: center; width: 36px; height: 10px; border: 1px solid #262626; padding-left: 2px; gap: 2px; }
.flip { transform: scaleX(-1); color: #ddd; }
.kind { flex: 1; }
.filters { display: flex; flex: 1; justify-content: space-between; padding: 0 13px 0 10px; color: #ccc; }
.switch { width: 4px; height: 9px; background: linear-gradient(#aaa 35%, #222 35%); }
.blend { width: 57px; height: 11px; border: 1px solid #282828; padding-left: 3px; }
.pct { display: flex; align-items: center; margin-left: auto; gap: 2px; white-space: nowrap; }
.pct input { width: 18px; height: 11px; background: #262626; padding-left: 2px; }
.dd { width: 9px; height: 11px; background: #444; border: 1px solid #262626; }
.locks { display: flex; gap: 5px; margin-left: 5px; color: #ccc; }
.list { list-style: none; margin: 0; padding: 0; border-right: 6px solid #262626; color: #c8c8c8; }
.list li { display: flex; align-items: center; height: 20px; padding-right: 5px; gap: 4px; border-bottom: 1px solid #262626; font-size: 7px; white-space: nowrap; }
.list li.sel { background: #4a5366; }
.list em { font-weight: bold; font-size: 6px; }
.vis { width: 15px; height: 20px; display: grid; place-items: center; border-right: 1px solid #2b2b2b; margin-right: -2px; }
.thumb { width: 16px; height: 16px; background: #fff; position: relative; }
.thumb.chk { background: linear-gradient(#ffb6a0, #ffb6a0) 8px 2px / 3px 3px no-repeat, repeating-conic-gradient(#ccc 0 25%, #fff 0 50%) 0 0 / 4px 4px; }
.thumb.sel { outline: 1px solid #ddd; }
.tf { position: absolute; right: -1px; bottom: -1px; width: 8px; height: 8px; background: #3b3f48; color: #ccc; }
.lk { margin-left: auto; }
.empty { flex: 1; background: #2b2b2b; border-right: 6px solid #262626; }
.lfoot { height: 10px; display: flex; align-items: center; justify-content: flex-end; gap: 7px; padding-right: 14px; color: #ccc; }
.dimmer { color: #777; }
.fx { font: italic bold 7px/8px "Liberation Serif", serif; }

.taskbar { height: 4px; flex: none; display: flex; background: #0b0f16; border-top: 1px solid #444; overflow: hidden; }
.orb { width: 14px; height: 10px; border-radius: 50%; background: #9ab; margin-left: 7px; }
.apps { display: flex; gap: 3px; margin-left: 10px; }
.apps i { width: 29px; height: 4px; background: linear-gradient(90deg, #888, #4a4a4a); }
.apps .a1 { background: linear-gradient(90deg, #bbb 25%, #28a4cc 25% 75%, #bbb 75%); }
.apps .a2 { background: linear-gradient(90deg, #999 35%, #e0763a 35% 65%, #777 65%); }
.apps .a3 { background: linear-gradient(90deg, #888 35%, #ddd 35% 50%, #4a4 50% 65%, #777 65%); }
.apps .a4 { background: linear-gradient(90deg, #aaa 30%, #d9a030 30% 75%, #888 75%); }
.clock { margin-left: auto; padding-right: 10px; color: #ddd; }
.desk { width: 8px; background: #777; }

.watermark { position: absolute; right: 50px; bottom: 17px; width: 184px; height: 90px; opacity: .93; }
.wb { font: bold 40px "Liberation Sans", sans-serif; }
.wc { font: bold 30px "Noto Sans CJK SC", sans-serif; }
.wu { font: 21px "Open Sans", sans-serif; }
.wd { font: bold 23px "Liberation Sans", sans-serif; fill: #3a3a3a; }
```
